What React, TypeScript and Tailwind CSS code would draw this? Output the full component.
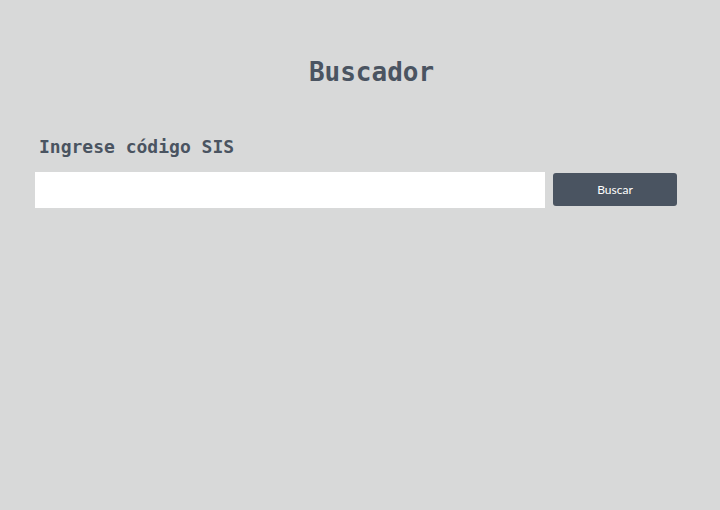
import React from "react";

export default function App() {
  return (
    <div className="w-[720px] h-[510px] bg-[#d8d9d9] overflow-hidden">
      <div className="ml-[35px] mr-[12px] pt-[53px]">
        <h1 className="text-center text-[26px] leading-[38px] font-bold text-[#4a5461] [font-family:'DejaVu_Sans_Mono',monospace]">
          Buscador
        </h1>
        <label className="block mt-[43px] ml-[4px] text-[18px] leading-[26px] font-bold text-[#4a5461] [font-family:'DejaVu_Sans_Mono',monospace]">
          Ingrese código SIS
        </label>
        <div className="mt-[12px] flex items-start gap-[8px]">
          <input
            type="text"
            className="w-[510px] h-[36px] bg-white outline-none border-0"
          />
          <button className="mt-[1px] w-[124px] h-[33px] rounded-[3px] bg-[#4a5461] text-white text-[12px] [font-family:Lato,sans-serif]">
            Buscar
          </button>
        </div>
      </div>
    </div>
  );
}
